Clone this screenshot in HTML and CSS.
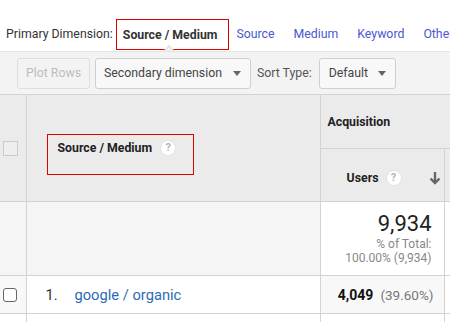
FILE: index.html
```html
<!DOCTYPE html>
<html>
<head>
<meta charset="utf-8">
<link rel="stylesheet" href="styles.css">
</head>
<body>
<div class="page">
  <div class="primary">
    <span class="label">Primary Dimension:</span>
    <span class="sel">Source / Medium<span class="notch"></span></span>
    <a class="dim first">Source</a>
    <a class="dim">Medium</a>
    <a class="dim">Keyword</a>
    <a class="dim">Other</a>
  </div>
  <div class="toolbar">
    <button class="btn disabled">Plot Rows</button>
    <button class="btn select sec">Secondary dimension <span class="caret"></span></button>
    <span class="sort-label">Sort Type:</span>
    <button class="btn select def">Default <span class="caret"></span></button>
  </div>
  <table class="grid">
    <colgroup>
      <col class="c1"><col class="c2"><col class="c3"><col class="c4">
    </colgroup>
    <thead>
      <tr class="h1">
        <th class="chk" rowspan="2"><span class="hbox"></span></th>
        <th class="dimhead" rowspan="2">
          <span class="dimtext">Source / Medium</span><span class="q">?</span>
          <span class="mark"></span>
        </th>
        <th class="group" colspan="2">Acquisition</th>
      </tr>
      <tr class="h2">
        <th class="metric">
          <div class="mwrap"><span>Users</span><span class="q">?</span>
            <svg class="arrow" width="12" height="14" viewBox="0 0 12 14"><path d="M6 1v11M1.5 7.5L6 12l4.5-4.5" fill="none" stroke="#666" stroke-width="2.4"/></svg>
          </div>
        </th>
        <th class="more"></th>
      </tr>
    </thead>
    <tbody>
      <tr class="total">
        <td class="chk"></td>
        <td class="tsrc"></td>
        <td class="tval">
          <div class="big">9,934</div>
          <div class="sub">% of Total:</div>
          <div class="sub">100.00% (9,934)</div>
        </td>
        <td class="more"></td>
      </tr>
      <tr class="row">
        <td class="chk"><span class="rbox"></span></td>
        <td class="src"><span class="idx">1.</span><a class="link">google / organic</a></td>
        <td class="val"><b>4,049</b><span class="pct">(39.60%)</span></td>
        <td class="more"></td>
      </tr>
      <tr class="row2">
        <td class="chk"></td>
        <td></td>
        <td></td>
        <td class="more"></td>
      </tr>
    </tbody>
  </table>
</div>
</body>
</html>
```
FILE: styles.css
```css
html, body {
  margin: 0;
  padding: 0;
  background: #fff;
}
.page {
  width: 450px;
  height: 322px;
  overflow: hidden;
  font-family: Roboto, "Liberation Sans", Arial, sans-serif;
  color: #333;
}
.primary {
  height: 51px;
  box-sizing: border-box;
  padding: 19px 0 0 6px;
  display: flex;
  align-items: flex-start;
  white-space: nowrap;
  font-size: 12.3px;
  overflow: hidden;
}
.primary .label {
  color: #333;
  line-height: 31px;
  margin-right: 3px;
}
.sel {
  position: relative;
  border: 1px solid #e00000;
  height: 29px;
  line-height: 30px;
  padding: 0 11px 0 6px;
  font-weight: 700;
  color: #333;
}
.notch {
  position: absolute;
  left: 48px;
  bottom: -6px;
  width: 7px;
  height: 7px;
  background: #f3f3f3;
  border-left: 1px solid #dcdcdc;
  border-top: 1px solid #dcdcdc;
  transform: rotate(45deg);
}
.dim {
  color: #4a58d2;
  line-height: 31px;
  margin-left: 19px;
  flex: none;
}
.dim.first {
  margin-left: 7px;
}
.toolbar {
  height: 43px;
  box-sizing: border-box;
  border-top: 1px solid #e4e4e4;
  background: #f3f3f3;
  display: flex;
  align-items: center;
  padding-left: 17px;
  white-space: nowrap;
}
.btn {
  font-family: Roboto, "Liberation Sans", Arial, sans-serif;
  font-size: 12.3px;
  height: 31px;
  box-sizing: border-box;
  border: 1px solid #cfcfcf;
  border-radius: 3px;
  background: #f8f8f8;
  color: #444;
  padding: 0 8px;
  margin: 0;
  display: flex;
  align-items: center;
}
.btn.disabled {
  width: 73px;
  color: #bdbdbd;
  border-color: #dedede;
  background: #f3f3f3;
  justify-content: center;
  padding: 0;
}
.btn.sec {
  width: 156px;
  margin-left: 5px;
  justify-content: space-between;
}
.btn.def {
  width: 77px;
  justify-content: space-between;
  padding-left: 9px;
}
.caret {
  width: 0;
  height: 0;
  border-left: 4px solid transparent;
  border-right: 4px solid transparent;
  border-top: 5px solid #666;
  margin-right: 1px;
}
.sort-label {
  font-size: 12.3px;
  color: #555;
  margin: 0 7px 0 6px;
}
.grid {
  border-collapse: collapse;
  table-layout: fixed;
  width: 504px;
  font-size: 12.3px;
}
.c1 { width: 26px; }
.c2 { width: 294px; }
.c3 { width: 124px; }
.c4 { width: 60px; }
.grid th, .grid td {
  border: 1px solid #d3d3d3;
  padding: 0;
}
.grid tr > :first-child {
  border-left: none;
}
.grid thead th {
  background: #ebebeb;
  color: #222;
  font-weight: 700;
  text-align: left;
}
.h1 { height: 54px; }
.h2 { height: 53px; }
.chk {
  text-align: left;
}
.hbox {
  display: block;
  width: 13px;
  height: 13px;
  margin-left: 3px;
  border: 1px solid #cbcbcb;
  background: #eeeeee;
}
.dimhead {
  position: relative;
  padding-left: 31px !important;
  white-space: nowrap;
}
.dimtext {
  vertical-align: middle;
}
.q {
  display: inline-block;
  width: 16px;
  height: 16px;
  border-radius: 50%;
  background: #fff;
  color: #b3b3b3;
  border: 1px solid #e2e2e2;
  box-sizing: border-box;
  font-size: 11px;
  font-weight: 700;
  line-height: 14px;
  text-align: center;
  vertical-align: middle;
  margin-left: 8px;
}
.mark {
  position: absolute;
  left: 20px;
  top: 39px;
  width: 145px;
  height: 39px;
  border: 1px solid #e00000;
}
.group {
  padding-left: 7px !important;
}
.metric {
  vertical-align: middle;
  padding-top: 6px !important;
}
.mwrap {
  display: flex;
  align-items: center;
  justify-content: flex-end;
  padding-right: 3px;
}
.mwrap .q {
  margin-left: 7px;
}
.arrow {
  margin-left: 27px;
}
.total {
  height: 74px;
}
.total .chk, .tsrc {
  background: #f5f5f5;
}
.tval {
  text-align: right;
  padding-right: 12px !important;
  vertical-align: top;
  background: #fff;
}
.big {
  font-size: 22px;
  color: #222;
  line-height: 26px;
  margin-top: 9px;
}
.sub {
  font-size: 12px;
  color: #888;
  line-height: 14px;
}
.row {
  height: 38px;
}
.row .chk {
  background: #f8f8f8;
}
.rbox {
  display: block;
  width: 14px;
  height: 14px;
  box-sizing: border-box;
  margin-left: 3px;
  border: 1.5px solid #666;
  border-radius: 3px;
  background: #fff;
}
.src {
  font-size: 14.7px;
  padding-left: 19px !important;
  white-space: nowrap;
}
.idx {
  color: #333;
  display: inline-block;
  width: 29px;
}
.link {
  color: #2b6bb5;
}
.val {
  background: #f8f8f8;
  text-align: right;
  padding-right: 10px !important;
  white-space: nowrap;
  font-size: 13.5px;
}
.val b {
  color: #111;
  font-size: 14px;
}
.pct {
  color: #777;
  margin-left: 7px;
}
.row2 {
  height: 20px;
}
.more {
  background: #fff;
}
thead .more {
  background: #ebebeb;
}
```
